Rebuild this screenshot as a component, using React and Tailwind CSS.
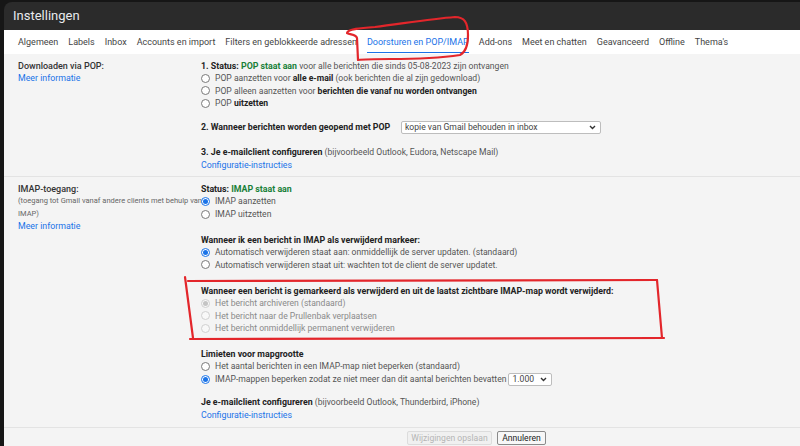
const tabs = [
  "Algemeen",
  "Labels",
  "Inbox",
  "Accounts en import",
  "Filters en geblokkeerde adressen",
  "Doorsturen en POP/IMAP",
  "Add-ons",
  "Meet en chatten",
  "Geavanceerd",
  "Offline",
  "Thema's",
]

function Radio({ checked, disabled }) {
  if (disabled) {
    return (
      <span className="flex h-[9px] w-[9px] shrink-0 items-center justify-center rounded-full border border-[#d0d0d0] bg-[#f8f8f8]">
        {checked && <span className="h-[5px] w-[5px] rounded-full bg-[#c4c4c4]" />}
      </span>
    )
  }
  return (
    <span
      className={
        checked
          ? "flex h-[9px] w-[9px] shrink-0 items-center justify-center rounded-full border border-[#1a73e8] bg-white"
          : "flex h-[9px] w-[9px] shrink-0 items-center justify-center rounded-full border border-[#7a7a7a] bg-white"
      }
    >
      {checked && <span className="h-[5px] w-[5px] rounded-full bg-[#1a73e8]" />}
    </span>
  )
}

function Option({ checked, disabled, children }) {
  return (
    <div className={disabled ? "flex h-[12.4px] items-center gap-[5px] text-[#8a8a8a]" : "flex h-[12.4px] items-center gap-[5px] text-[#555]"}>
      <Radio checked={checked} disabled={disabled} />
      <span className="whitespace-nowrap">{children}</span>
    </div>
  )
}

function Select({ value, width }) {
  return (
    <div
      className="flex h-[13px] shrink-0 items-center justify-between rounded-[2px] border border-[#bdbdbd] bg-white pl-[3px] pr-[4px] text-[#444]"
      style={{ width }}
    >
      <span className="whitespace-nowrap">{value}</span>
      <svg width="7" height="5" viewBox="0 0 7 5">
        <path d="M1 1 L3.5 3.5 L6 1" fill="none" stroke="#333" strokeWidth="1.4" />
      </svg>
    </div>
  )
}

function Line({ children, className = "" }) {
  return <div className={"h-[12.4px] whitespace-nowrap " + className}>{children}</div>
}

const head = "font-bold text-[8.8px] text-[#222]"
const link = "text-[8.8px] text-[#1a73e8]"

export default function App() {
  return (
    <div className="relative flex h-[446px] w-[800px] flex-col overflow-hidden bg-[#161616] pl-[4px] pt-[2px] font-['Roboto',sans-serif] text-[8.6px] leading-[12.4px]">
      <div className="flex h-[28px] shrink-0 items-center rounded-tl-[8px] bg-[#2b2b2b] pl-[9px] text-[13px] text-[#e8eaed]">
        Instellingen
      </div>

      <div className="flex h-[24px] shrink-0 items-center gap-[10px] bg-white pl-[14px] text-[9px] text-[#444]">
        {tabs.map((t) => (
          <div
            key={t}
            className={t === "Doorsturen en POP/IMAP" ? "relative flex h-full items-center whitespace-nowrap text-[#1a73e8]" : "flex h-full items-center whitespace-nowrap"}
          >
            {t}
            {t === "Doorsturen en POP/IMAP" && <span className="absolute bottom-[1px] left-0 right-0 h-[1.5px] bg-[#1a73e8]" />}
          </div>
        ))}
      </div>

      <div className="flex-1 bg-[#f4f4f4] text-[#555]">
        <div className="flex pb-[5px] pl-[14px] pt-[6px]">
          <div className="w-[183px] shrink-0">
            <Line className="text-[9px] font-medium text-[#333]">Downloaden via POP:</Line>
            <Line className={link}>Meer informatie</Line>
          </div>
          <div>
            <Line>
              <span className={head}>1. Status: </span>
              <span className="text-[8.8px] font-bold text-[#188038]">POP staat aan</span> voor alle berichten die sinds 05-08-2023 zijn ontvangen
            </Line>
            <Option>
              POP aanzetten voor <b className="text-[#222]">alle e-mail</b> (ook berichten die al zijn gedownload)
            </Option>
            <Option>
              POP alleen aanzetten voor <b className="text-[#222]">berichten die vanaf nu worden ontvangen</b>
            </Option>
            <Option>
              POP <b className="text-[#222]">uitzetten</b>
            </Option>
            <div className="mt-[11.6px] flex h-[13px] items-center">
              <span className={"w-[200px] whitespace-nowrap " + head}>2. Wanneer berichten worden geopend met POP</span>
              <Select value="kopie van Gmail behouden in inbox" width={200} />
            </div>
            <Line className="mt-[12.3px]">
              <span className={head}>3. Je e-mailclient configureren</span> (bijvoorbeeld Outlook, Eudora, Netscape Mail)
            </Line>
            <Line className={link}>Configuratie-instructies</Line>
          </div>
        </div>

        <div className="border-t border-[#e3e3e3]" />

        <div className="flex pb-[6.4px] pl-[14px] pt-[5.8px]">
          <div className="w-[183px] shrink-0">
            <Line className="text-[9px] font-medium text-[#333]">IMAP-toegang:</Line>
            <div className="text-[7.5px] leading-[12.4px] text-[#666]">
              <div className="whitespace-nowrap">(toegang tot Gmail vanaf andere clients met behulp van</div>
              <div className="whitespace-nowrap">IMAP)</div>
            </div>
            <Line className={link}>Meer informatie</Line>
          </div>
          <div>
            <Line>
              <span className={head}>Status: </span>
              <span className="text-[8.8px] font-bold text-[#188038]">IMAP staat aan</span>
            </Line>
            <Option checked>IMAP aanzetten</Option>
            <Option>IMAP uitzetten</Option>

            <Line className={"mt-[13.8px] " + head}>Wanneer ik een bericht in IMAP als verwijderd markeer:</Line>
            <Option checked>Automatisch verwijderen staat aan: onmiddellijk de server updaten. (standaard)</Option>
            <Option>Automatisch verwijderen staat uit: wachten tot de client de server updatet.</Option>

            <Line className={"mt-[13.8px] " + head}>
              Wanneer een bericht is gemarkeerd als verwijderd en uit de laatst zichtbare IMAP-map wordt verwijderd:
            </Line>
            <Option checked disabled>Het bericht archiveren (standaard)</Option>
            <Option disabled>Het bericht naar de Prullenbak verplaatsen</Option>
            <Option disabled>Het bericht onmiddellijk permanent verwijderen</Option>

            <Line className={"mt-[13.4px] " + head}>Limieten voor mapgrootte</Line>
            <Option>Het aantal berichten in een IMAP-map niet beperken (standaard)</Option>
            <div className="flex h-[13px] items-center gap-[5px] text-[#555]">
              <Radio checked />
              <span className="whitespace-nowrap">IMAP-mappen beperken zodat ze niet meer dan dit aantal berichten bevatten</span>
              <div className="-ml-[3px]">
                <Select value="1.000" width={44} />
              </div>
            </div>

            <Line className="mt-[10.5px]">
              <span className={head}>Je e-mailclient configureren</span> (bijvoorbeeld Outlook, Thunderbird, iPhone)
            </Line>
            <Line className={link}>Configuratie-instructies</Line>
          </div>
        </div>

        <div className="border-t border-[#e3e3e3]" />

        <div className="flex gap-[5px] pl-[403px] pt-[3px]">
          <div className="flex h-[14px] w-[85px] items-center justify-center rounded-[2px] border border-[#dcdcdc] bg-[#f0f0f0] text-[#b5b5b5]">
            Wijzigingen opslaan
          </div>
          <div className="flex h-[14px] w-[49px] items-center justify-center rounded-[2px] border border-[#8a8a8a] bg-[#f7f7f7] text-[#222]">
            Annuleren
          </div>
        </div>
      </div>

      <svg className="pointer-events-none absolute left-0 top-0" width="800" height="446" viewBox="0 0 800 446">
        <g fill="none" stroke="#e3262b" strokeWidth="2.2" strokeLinecap="round" strokeLinejoin="round">
          <path d="M358,60 L357,38 C356,34 350,35 347,33 C348,29 360,28 375,27 C400,24 430,19 455,17 C464,17 468,22 468,35 C468,45 466,52 460,55 C440,58 410,59 390,59 C375,59 365,59 358,60" />
          <path d="M185,277 L193,338" />
          <path d="M188,281 L657,280" />
          <path d="M657,280 L662,338" />
          <path d="M190,339 L664,338" />
        </g>
      </svg>
    </div>
  )
}
